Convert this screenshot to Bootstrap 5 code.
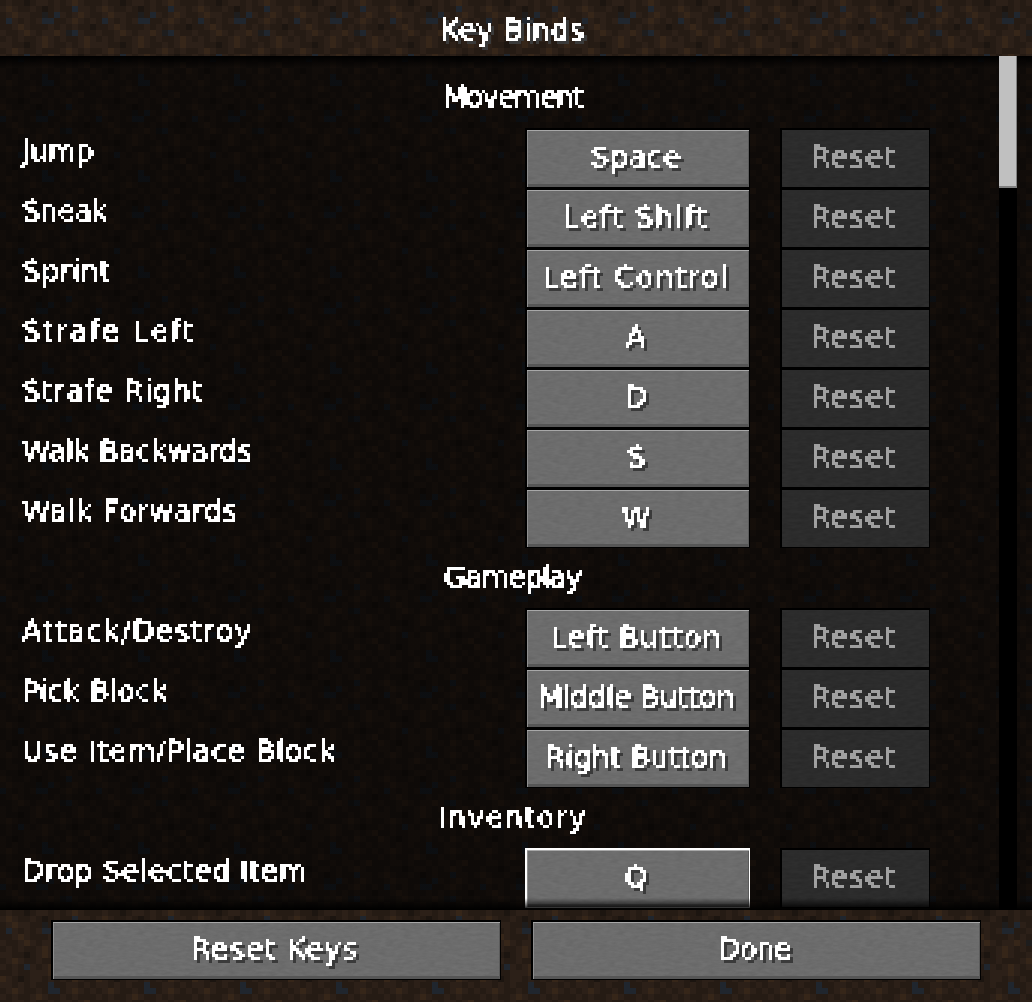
<!doctype html>
<html lang="en">
<head>
<meta charset="utf-8">
<title>Key Binds</title>
<link href="https://cdn.jsdelivr.net/npm/bootstrap@5.3.0/dist/css/bootstrap.min.css" rel="stylesheet">
<style>
html,body{height:100%;overflow:hidden;background:#000}
body{font-family:"DejaVu Sans",sans-serif;font-size:29px;color:#fff;line-height:1}
.mc-dirt{background-color:#2b1f17;background-image:var(--tile);background-size:96px 96px}
.mc-head{height:56px;padding-right:3px;line-height:56px;padding-top:2px}
.mc-listwrap{height:854px;position:relative;background-color:#110d0a;background-image:linear-gradient(rgba(0,0,0,.62),rgba(0,0,0,.62)),var(--tile);background-size:auto,96px 96px;background-position:0 0,-6px 42px}
.mc-listwrap::before,.mc-listwrap::after{content:"";position:absolute;left:0;right:0;height:12px;z-index:1;pointer-events:none}
.mc-listwrap::before{top:0;background:linear-gradient(#000,transparent)}
.mc-listwrap::after{bottom:0;background:linear-gradient(transparent,#000)}
.mc-list{width:999px;padding-top:12px}
.mc-cat{height:60px;padding-left:30px;line-height:58px}
.mc-row{height:60px;padding-right:69px}
.mc-label{padding-left:22px;line-height:46px}
.mc-gap{width:30px}
.mc-txt{display:inline-block;padding:0 4px 4px 0;line-height:1.15;filter:url(#mc-px)}
.mc-sh .mc-txt,.mc-head .mc-txt{filter:url(#mc-pxs)}
.btn.mc-btn{--bs-btn-padding-x:0;--bs-btn-padding-y:0;padding-top:2px;height:60px;border-radius:0;border-style:solid;border-color:#000;border-width:2px 1px 1px 2px;color:#fff;font-size:29px;line-height:1;
background-color:#707070;background-image:var(--noise);box-shadow:inset 0 1px 0 #a8a8a8,inset 1px 0 0 #8e8e8e,inset -1px 0 0 #5a5a5a,inset 0 -3px 0 #565656;opacity:1;white-space:nowrap}
.btn.mc-key{width:225px}
.btn.mc-reset{width:150px;color:#a0a0a0;background-color:#2e2e2e;background-image:var(--noisedark);box-shadow:none;opacity:1}
.btn.mc-focus{border-color:#fff}
.btn.mc-wide{width:450px}
.mc-track{width:18px;background:#000;position:relative;z-index:2}
.mc-thumb{height:132px;background:#c0c0c0;box-shadow:inset -1px -2px 0 #808080}
.mc-foot{height:92px;padding:10px 0 0 51px;gap:30px}
.sp-a{letter-spacing:-1.8px}.sp-b{letter-spacing:-1.3px}.sp-c{letter-spacing:-.9px}.sp-d{letter-spacing:-.8px}.sp-e{letter-spacing:-.6px}.sp-f{letter-spacing:-.5px}.sp-g{letter-spacing:-.4px}.sp-h{letter-spacing:-.1px}.sp-i{letter-spacing:.1px}.sp-j{letter-spacing:.3px}.sp-k{letter-spacing:.4px}.sp-l{letter-spacing:.5px}.sp-m{letter-spacing:.55px}.sp-n{letter-spacing:.7px}.sp-o{letter-spacing:.9px}.sp-p{letter-spacing:1.1px}.sp-q{letter-spacing:1.2px}.sp-r{letter-spacing:1.5px}.sp-s{letter-spacing:1.6px}.sp-t{letter-spacing:2px}
:root{
--noise:url("data:image/svg+xml,%3Csvg xmlns='http://www.w3.org/2000/svg' width='300' height='60'%3E%3Cfilter id='n' color-interpolation-filters='sRGB'%3E%3CfeTurbulence type='fractalNoise' baseFrequency='.12 .34' numOctaves='2' seed='4'/%3E%3CfeColorMatrix values='0 0 0 0 .38 0 0 0 0 .38 0 0 0 0 .38 .7 .7 0 0 -.45'/%3E%3C/filter%3E%3Crect width='300' height='60' filter='url(%23n)'/%3E%3C/svg%3E");
--noisedark:url("data:image/svg+xml,%3Csvg xmlns='http://www.w3.org/2000/svg' width='300' height='60'%3E%3Cfilter id='n' color-interpolation-filters='sRGB'%3E%3CfeTurbulence type='fractalNoise' baseFrequency='.12 .34' numOctaves='2' seed='9'/%3E%3CfeColorMatrix values='0 0 0 0 .14 0 0 0 0 .14 0 0 0 0 .14 .7 .7 0 0 -.45'/%3E%3C/filter%3E%3Crect width='300' height='60' filter='url(%23n)'/%3E%3C/svg%3E");
}
</style>
</head>
<body class="d-flex flex-column m-0">
<svg width="0" height="0" class="position-absolute" aria-hidden="true">
<filter id="mc-px" x="0" y="0" width="100%" height="100%" color-interpolation-filters="sRGB"><feFlood x="1" y="1" width="1" height="1" flood-color="#000"/><feComposite width="3" height="3"/><feTile result="g"/><feConvolveMatrix in="SourceGraphic" order="3" kernelMatrix="1 1 1 1 1 1 1 1 1" divisor="9" preserveAlpha="false" result="c"/><feComposite in="c" in2="g" operator="in"/><feMorphology operator="dilate" radius="1"/><feComponentTransfer><feFuncA type="discrete" tableValues="0 0 0 0 0 0 1 1 1 1 1 1 1 1 1 1 1 1 1 1"/></feComponentTransfer></filter>
<filter id="mc-pxs" x="0" y="0" width="100%" height="100%" color-interpolation-filters="sRGB"><feFlood x="1" y="1" width="1" height="1" flood-color="#000"/><feComposite width="3" height="3"/><feTile result="g"/><feConvolveMatrix in="SourceGraphic" order="3" kernelMatrix="1 1 1 1 1 1 1 1 1" divisor="9" preserveAlpha="false" result="c"/><feComposite in="c" in2="g" operator="in"/><feMorphology operator="dilate" radius="1"/><feComponentTransfer result="t"><feFuncA type="discrete" tableValues="0 0 0 0 0 0 1 1 1 1 1 1 1 1 1 1 1 1 1 1"/></feComponentTransfer><feOffset in="t" dx="3" dy="3" result="o"/><feFlood flood-color="#3a3a3a" result="f"/><feComposite in="f" in2="o" operator="in" result="s"/><feMerge><feMergeNode in="s"/><feMergeNode in="t"/></feMerge></filter>
</svg>
<header class="mc-dirt mc-head text-center"><span class="mc-txt sp-j">Key Binds</span></header>
<main class="mc-listwrap d-flex overflow-hidden">
  <div class="mc-list">
    <div class="mc-cat text-center"><span class="mc-txt sp-a">Movement</span></div>
    <div class="mc-row d-flex"><div class="mc-label flex-grow-1"><span class="mc-txt sp-e">Jump</span></div><button class="btn mc-btn mc-key mc-sh"><span class="mc-txt sp-l">Space</span></button><div class="mc-gap"></div><button class="btn mc-btn mc-reset" disabled><span class="mc-txt sp-o">Reset</span></button></div>
    <div class="mc-row d-flex"><div class="mc-label flex-grow-1"><span class="mc-txt sp-d">Sneak</span></div><button class="btn mc-btn mc-key mc-sh"><span class="mc-txt sp-s">Left Shift</span></button><div class="mc-gap"></div><button class="btn mc-btn mc-reset" disabled><span class="mc-txt sp-o">Reset</span></button></div>
    <div class="mc-row d-flex"><div class="mc-label flex-grow-1"><span class="mc-txt sp-k">Sprint</span></div><button class="btn mc-btn mc-key mc-sh"><span class="mc-txt sp-r">Left Control</span></button><div class="mc-gap"></div><button class="btn mc-btn mc-reset" disabled><span class="mc-txt sp-o">Reset</span></button></div>
    <div class="mc-row d-flex"><div class="mc-label flex-grow-1"><span class="mc-txt sp-t">Strafe Left</span></div><button class="btn mc-btn mc-key mc-sh"><span class="mc-txt">A</span></button><div class="mc-gap"></div><button class="btn mc-btn mc-reset" disabled><span class="mc-txt sp-o">Reset</span></button></div>
    <div class="mc-row d-flex"><div class="mc-label flex-grow-1"><span class="mc-txt sp-n">Strafe Right</span></div><button class="btn mc-btn mc-key mc-sh"><span class="mc-txt">D</span></button><div class="mc-gap"></div><button class="btn mc-btn mc-reset" disabled><span class="mc-txt sp-o">Reset</span></button></div>
    <div class="mc-row d-flex"><div class="mc-label flex-grow-1"><span class="mc-txt sp-g">Walk Backwards</span></div><button class="btn mc-btn mc-key mc-sh"><span class="mc-txt">S</span></button><div class="mc-gap"></div><button class="btn mc-btn mc-reset" disabled><span class="mc-txt sp-o">Reset</span></button></div>
    <div class="mc-row d-flex"><div class="mc-label flex-grow-1"><span class="mc-txt sp-k">Walk Forwards</span></div><button class="btn mc-btn mc-key mc-sh"><span class="mc-txt">W</span></button><div class="mc-gap"></div><button class="btn mc-btn mc-reset" disabled><span class="mc-txt sp-o">Reset</span></button></div>
    <div class="mc-cat text-center"><span class="mc-txt sp-b">Gameplay</span></div>
    <div class="mc-row d-flex"><div class="mc-label flex-grow-1"><span class="mc-txt sp-p">Attack/Destroy</span></div><button class="btn mc-btn mc-key mc-sh"><span class="mc-txt sp-o">Left Button</span></button><div class="mc-gap"></div><button class="btn mc-btn mc-reset" disabled><span class="mc-txt sp-o">Reset</span></button></div>
    <div class="mc-row d-flex"><div class="mc-label flex-grow-1"><span class="mc-txt sp-i">Pick Block</span></div><button class="btn mc-btn mc-key mc-sh"><span class="mc-txt sp-f">Middle Button</span></button><div class="mc-gap"></div><button class="btn mc-btn mc-reset" disabled><span class="mc-txt sp-o">Reset</span></button></div>
    <div class="mc-row d-flex"><div class="mc-label flex-grow-1"><span class="mc-txt sp-m">Use Item/Place Block</span></div><button class="btn mc-btn mc-key mc-sh"><span class="mc-txt sp-h">Right Button</span></button><div class="mc-gap"></div><button class="btn mc-btn mc-reset" disabled><span class="mc-txt sp-o">Reset</span></button></div>
    <div class="mc-cat text-center"><span class="mc-txt sp-q">Inventory</span></div>
    <div class="mc-row d-flex"><div class="mc-label flex-grow-1"><span class="mc-txt sp-j">Drop Selected Item</span></div><button class="btn mc-btn mc-key mc-focus mc-sh"><span class="mc-txt">Q</span></button><div class="mc-gap"></div><button class="btn mc-btn mc-reset" disabled><span class="mc-txt sp-o">Reset</span></button></div>
  </div>
  <div class="mc-track"><div class="mc-thumb"></div></div>
</main>
<footer class="mc-dirt mc-foot d-flex">
  <button class="btn mc-btn mc-wide mc-sh"><span class="mc-txt sp-o">Reset Keys</span></button>
  <button class="btn mc-btn mc-wide mc-sh"><span class="mc-txt sp-c">Done</span></button>
</footer>
<script>
var rows=["bcbbabccbcbcdcbb","cdcbbcbabcbbsccb","bcdccbbtbscbcdcb","bscbcbcssbbcdcbc","bbcdcbbbcbcbcbba","cbbcdcbccdctscbb","bcbcbbcdcbcbbcdc","ccbbabcdcbbcbcdc","bcdcbbcbbbcdcbcb","cbcbscbcdcbcbabb","bbcbbcccdcbbcbcd","dcbabccbcbcbdcbb","ccbcbcbbsbbccbcb","bcdcbbcbssbcdcbc","cbcbbcdcbbcbcbbb","bbccbcbbcbccbcdb"];
var pal={a:"#1c1510",b:"#251b14",c:"#2c2018",d:"#362619",s:"#20262e",t:"#1e1d1d"};
var s="<svg xmlns='http://www.w3.org/2000/svg' width='96' height='96' shape-rendering='crispEdges'>";
rows.forEach(function(r,y){for(var x=0;x<16;x++){s+="<rect x='"+x*6+"' y='"+y*6+"' width='6' height='6' fill='"+pal[r[x]]+"'/>";}});
s+="</svg>";
document.documentElement.style.setProperty("--tile","url(\"data:image/svg+xml,"+encodeURIComponent(s)+"\")");
</script>
<script src="https://cdn.jsdelivr.net/npm/bootstrap@5.3.0/dist/js/bootstrap.bundle.min.js"></script>
</body>
</html>
